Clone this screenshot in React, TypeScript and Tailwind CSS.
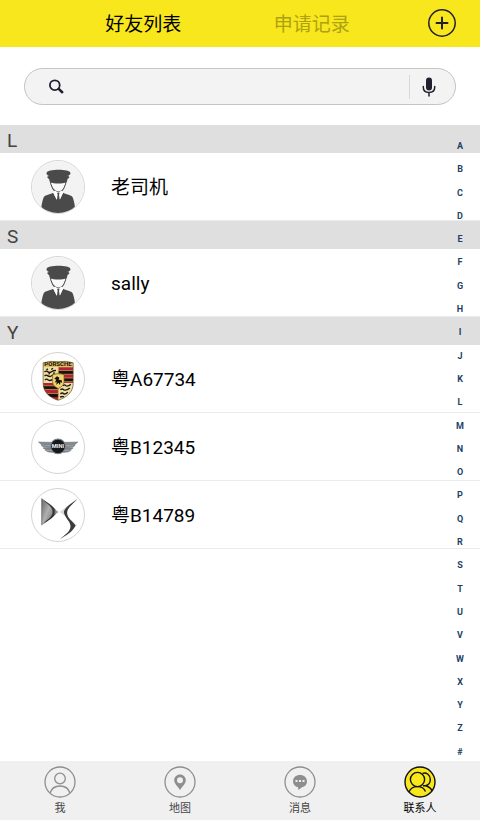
import type { ReactNode } from "react";

type Friend = { name: string; avatar: ReactNode };
type Group = { letter: string; friends: Friend[] };

const DriverAvatar = () => (
  <svg viewBox="3 3 154 154" className="w-full h-full" aria-hidden="true">
    <rect width="160" height="160" fill="#f3f3f3" />
    <path
      d="M57 58 C57 78 68 95 81 95 C94 95 104 78 104 58 Z"
      fill="#fafafa"
      stroke="#4a4a4a"
      strokeWidth="3"
    />
    <path
      d="M46 39 C47 26 116 26 117 39 C117 44 112 46 108 47 L114 50 C114 54 109 55 108 57 L106 66 C92 71 70 71 56 66 L54 57 C52 55 48 54 48 50 L54 47 C50 46 46 44 46 39 Z"
      fill="#4a4a4a"
    />
    <path
      d="M66 97 C54 104 40 103 37 112 C32 126 29 144 31 160 L130 160 C132 144 129 126 124 112 C121 103 107 104 95 97 L86 116 H76 Z"
      fill="#4a4a4a"
    />
    <path d="M66 97 L71 90 L81 97 L90 90 L95 97 L85 118 L81 104 L76 118 Z" fill="#fff" />
    <path d="M77 97 H85 L83 102 L85 118 L81 124 L77 118 L79 102 Z" fill="#4a4a4a" />
  </svg>
);

const PorscheLogo = () => (
  <svg viewBox="3 3 154 154" className="w-full h-full" aria-hidden="true">
    <defs>
      <clipPath id="crest">
        <path d="M36 32 Q59 25 80 29 Q103 25 125 32 V92 C125 120 106 134 80 143 C55 134 36 120 36 92 Z" />
      </clipPath>
    </defs>
    <g clipPath="url(#crest)">
      <rect x="34" y="24" width="94" height="122" fill="#efdfa4" />
      <g>
        <path d="M81 45 H128 V92 H81 Z M34 92 H81 V146 H34 Z" fill="#b5203a" />
        <path d="M81 55 H128 V66 H81 Z M81 77 H128 V88 H81 Z M34 100 H81 V111 H34 Z M34 123 H81 V134 H34 Z" fill="#16110d" />
        <path
          d="M81 55 H128 M81 66 H128 M81 77 H128 M81 88 H128 M34 100 H81 M34 111 H81 M34 123 H81 M81 45 V143"
          stroke="#d9b54a"
          strokeWidth="2"
        />
      </g>
      <path
        d="M40 59 q6 -5 10 0 q7 4 12 -1 q5 -4 12 -3 M40 71 q6 -5 10 0 q7 4 12 -1 q5 -4 12 -3 M41 83 q6 -5 10 0 q6 3 12 -1 M46 53 l4 -3 M60 52 l5 -4 M52 66 l4 -3 M66 64 l4 -3 M94 100 q6 -5 9 0 q6 3 15 -4 M87 112 q6 -5 10 0 q7 3 18 -5 M87 124 q6 -5 10 0 q5 2 12 -5 M86 134 q5 -4 12 -1"
        fill="none"
        stroke="#1d1710"
        strokeWidth="4"
      />
      <rect x="34" y="26" width="94" height="18" fill="#d8bb5c" />
      <text x="80" y="42" textAnchor="middle" fontSize="18" fontWeight="700" fill="#16110d" className="font-['Roboto',sans-serif]">
        PORSCHE
      </text>
      <path d="M64 67 Q80 61 98 67 V88 C98 99 89 104 81 108 C72 104 64 99 64 88 Z" fill="#f0d46f" stroke="#67511e" strokeWidth="2" />
      <path d="M69 79 L77 72 L84 76 L82 82 L91 84 L92 92 L87 89 L86 98 L81 91 L75 98 L76 88 L70 91 L75 82 Z" fill="#16110d" />
    </g>
    <path
      d="M36 32 Q59 25 80 29 Q103 25 125 32 V92 C125 120 106 134 80 143 C55 134 36 120 36 92 Z"
      fill="none"
      stroke="#5d481c"
      strokeWidth="2"
    />
  </svg>
);

const MiniLogo = () => (
  <svg viewBox="3 3 154 154" className="w-full h-full" aria-hidden="true">
    <g fill="#858b92" stroke="#4b5158" strokeWidth="1">
      <path d="M22 65 L62 66 L59 74 L31 73 Z" />
      <path d="M30 75 L58 76 V82 L37 81 Z" />
      <path d="M36 83 L59 83 L62 89 L43 88 Z" />
      <path d="M42 90 L63 91 L66 96 L51 95 Z" />
      <path d="M139 65 L99 66 L102 74 L130 73 Z" />
      <path d="M131 75 L103 76 V82 L124 81 Z" />
      <path d="M125 83 L102 83 L99 89 L118 88 Z" />
      <path d="M119 90 L98 91 L95 96 L110 95 Z" />
    </g>
    <circle cx="80" cy="78" r="22" fill="#15191c" stroke="#7d848b" strokeWidth="3" />
    <text x="80" y="84" textAnchor="middle" fontSize="17" fontWeight="700" fill="#f4f4f4" className="font-['Roboto',sans-serif]">
      MINI
    </text>
  </svg>
);

const DsLogo = () => (
  <svg viewBox="3 3 154 154" className="w-full h-full" aria-hidden="true">
    <defs>
      <linearGradient id="steel" x1="0" y1="0" x2="1" y2="1">
        <stop offset="0" stopColor="#666" />
        <stop offset="0.5" stopColor="#b0b0b0" />
        <stop offset="1" stopColor="#666" />
      </linearGradient>
    </defs>
    <path d="M32 31 L82 71 L32 110 Z" fill="#dedede" stroke="#bdbdbd" strokeWidth="1" />
    <path d="M32 31 C43 44 66 52 66 71 C66 90 43 97 32 110 Z" fill="url(#steel)" />
    <path d="M33 32 C45 46 64 54 64 71 C64 87 45 95 33 109 C50 96 67 90 76 71 C67 52 50 45 33 32 Z" fill="#333" />
    <path d="M67 62 L80 71 L67 80 C72 74 72 68 67 62 Z" fill="#8a8a8a" />
    <path d="M32 31 V110" stroke="#555" strokeWidth="2" />
    <path d="M136 33 L86 71 L104 84 C106 56 124 47 136 33 Z" fill="#dedede" stroke="#bdbdbd" strokeWidth="1" />
    <path d="M104 82 L135 110 L88 150 C104 139 127 131 125 113 C123 101 108 94 104 82 Z" fill="#dedede" stroke="#bdbdbd" strokeWidth="1" />
    <path d="M136 33 C120 46 103 54 97 71 C101 91 117 98 117 113 C117 130 99 138 88 150 C104 139 122 132 132 111 C124 98 107 90 107 73 C107 57 126 47 136 33 Z" fill="#3a3a3a" />
  </svg>
);

const groups: Group[] = [
  { letter: "L", friends: [{ name: "老司机", avatar: <DriverAvatar /> }] },
  { letter: "S", friends: [{ name: "sally", avatar: <DriverAvatar /> }] },
  {
    letter: "Y",
    friends: [
      { name: "粤A67734", avatar: <PorscheLogo /> },
      { name: "粤B12345", avatar: <MiniLogo /> },
      { name: "粤B14789", avatar: <DsLogo /> },
    ],
  },
];

const letters = "ABCDEFGHIJKLMNOPQRSTUVWXYZ#".split("");

const navItems = [
  {
    label: "我",
    active: false,
    icon: (
      <g fill="none" stroke="#8e8e8e" strokeWidth="1.3">
        <circle cx="16" cy="16" r="15" />
        <circle cx="16" cy="12.5" r="5.3" />
        <path d="M6 27 C7.5 22.5 10.5 20 16 20 C21.5 20 24.5 22.5 26 27" />
      </g>
    ),
  },
  {
    label: "地图",
    active: false,
    icon: (
      <g>
        <circle cx="16" cy="16" r="15" fill="none" stroke="#8e8e8e" strokeWidth="1.3" />
        <path
          d="M16 8.5 C12.7 8.5 10.2 11 10.2 14.3 C10.2 18 14 20.5 16 24 C18 20.5 21.8 18 21.8 14.3 C21.8 11 19.3 8.5 16 8.5 Z M16 11.3 A3 3 0 1 1 16 17.3 A3 3 0 1 1 16 11.3 Z"
          fill="#8e8e8e"
          fillRule="evenodd"
        />
      </g>
    ),
  },
  {
    label: "消息",
    active: false,
    icon: (
      <g>
        <circle cx="16" cy="16" r="15" fill="none" stroke="#8e8e8e" strokeWidth="1.3" />
        <path
          d="M16 9 C11.8 9 9 11.7 9 15.2 C9 18.3 10.8 20.4 14 21.2 L14.5 24 L18 21.2 C21.2 20.5 23 18.3 23 15.2 C23 11.7 20.2 9 16 9 Z"
          fill="#8e8e8e"
        />
        <path d="M11.5 14 h2 v2 h-2 Z M15 14 h2 v2 h-2 Z M18.5 14 h2 v2 h-2 Z" fill="#f0f0f0" />
      </g>
    ),
  },
  {
    label: "联系人",
    active: true,
    icon: (
      <g fill="none" stroke="#111" strokeWidth="1.4">
        <circle cx="16" cy="16" r="15" fill="#f8e71c" />
        <circle cx="13.5" cy="13.5" r="7.1" />
        <path d="M5 26 C6.5 22 9 20.6 13.5 20.6 C17.5 20.6 20 22 21.5 25.5" />
        <path d="M18.5 7.3 C22.5 6 26.3 9 26.3 13.5 C26.3 16.5 24.5 19 21.5 19.8 H19 M21.5 19.8 C25 20.5 27 22.5 28 25" />
      </g>
    ),
  },
];

const App = () => {
  return (
    <div className="w-full min-h-screen flex flex-col bg-white text-black font-['Roboto','Noto_Sans_CJK_SC',sans-serif]">
      <header className="h-[47px] shrink-0 flex items-start bg-[#f8e71c] pl-[59px] pr-6 pt-[9px]">
        <div className="flex-1 flex mr-8 text-[19px] leading-8">
          <button className="flex-1" type="button">
            好友列表
          </button>
          <button className="flex-1 text-[#ada113]" type="button">
            申请记录
          </button>
        </div>
        <button type="button" aria-label="添加好友">
          <svg className="w-7 h-7" viewBox="0 0 28 28" fill="none" stroke="#231f30" strokeLinecap="round">
            <circle cx="14" cy="14" r="13.2" strokeWidth="1.5" />
            <path d="M14 8.5 V19.5 M8.5 14 H19.5" strokeWidth="2" />
          </svg>
        </button>
      </header>

      <main className="flex-1 flex flex-col">
        <form className="mx-6 mt-[21px] mb-5 h-[37px] flex items-center rounded-full border border-[#c4c4c4] bg-[#f3f3f3] pl-6 pr-[19px]">
          <label htmlFor="search" aria-label="搜索">
            <svg className="w-4 h-4" viewBox="0 0 16 16" fill="none" stroke="#231f30" strokeLinecap="round">
              <circle cx="5.8" cy="6.2" r="4.9" strokeWidth="1.8" />
              <path d="M9.7 9.9 L13.2 13.2" strokeWidth="2.6" />
            </svg>
          </label>
          <input id="search" className="flex-1 min-w-0 h-full px-2 text-base bg-transparent focus:outline-none" type="text" />
          <button className="h-6 flex items-center pl-3 border-l border-[#d8d8d8]" type="button" aria-label="语音输入">
            <svg className="w-[14px] h-5" viewBox="0 0 14 20" fill="none" stroke="#231f30" strokeLinecap="round">
              <rect x="4" y="0.5" width="6" height="13" rx="3" fill="#231f30" stroke="none" />
              <path d="M1.3 9.5 V10.2 C1.3 13.5 3.7 15.4 7 15.4 C10.3 15.4 12.7 13.5 12.7 10.2 V9.5 M7 15.5 V19" strokeWidth="1.5" />
            </svg>
          </button>
        </form>

        <div className="relative flex-1">
          {groups.map((group) => (
            <section key={group.letter}>
              <h2 className="h-7 pl-[7px] pt-0.5 text-[19px] leading-7 text-[#444] bg-[#dfdfdf]">{group.letter}</h2>
              <ul>
                {group.friends.map((friend) => (
                  <li key={friend.name} className="h-[68px] flex items-center gap-[26px] pl-[31px] border-b border-[#ebebeb]">
                    <div className="w-[54px] h-[54px] shrink-0 rounded-full overflow-hidden border border-[#d4d4d4]">
                      {friend.avatar}
                    </div>
                    <span className="pt-0.5 text-[19px] leading-6">{friend.name}</span>
                  </li>
                ))}
              </ul>
            </section>
          ))}
          <nav className="absolute top-[13px] bottom-px right-0 w-10 flex flex-col justify-between" aria-label="字母索引">
            {letters.map((letter) => (
              <button key={letter} className="text-[9px] leading-4 font-bold text-[#1f3f66]" type="button">
                {letter}
              </button>
            ))}
          </nav>
        </div>
      </main>

      <nav className="h-[59px] shrink-0 flex bg-[#f0f0f0]">
        {navItems.map((item) => (
          <button key={item.label} className="flex-1 flex flex-col items-center pt-[5px]" type="button">
            <svg className="w-8 h-8" viewBox="0 0 32 32" aria-hidden="true">
              {item.icon}
            </svg>
            <span className={item.active ? "mt-[3px] text-[11px] leading-4 text-black" : "mt-[3px] text-[11px] leading-4 text-[#444]"}>
              {item.label}
            </span>
          </button>
        ))}
      </nav>
    </div>
  );
};

export default App;
